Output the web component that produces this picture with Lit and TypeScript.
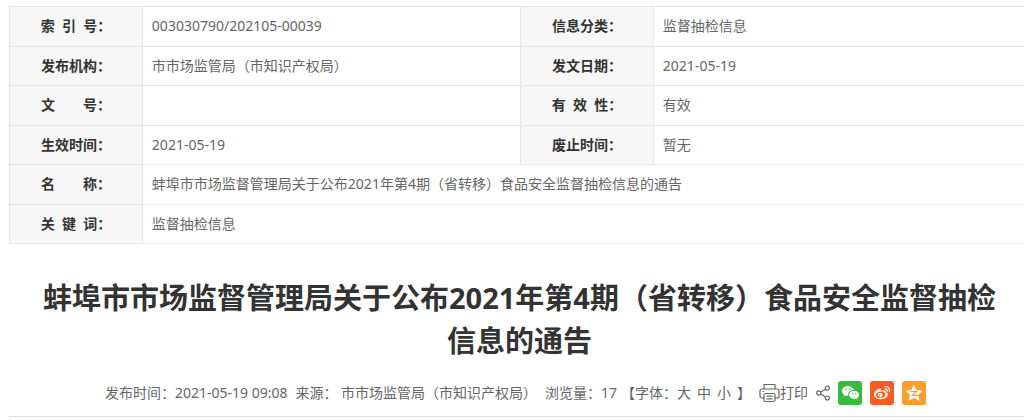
import { LitElement, html, css, nothing } from "lit";
import { customElement } from "lit/decorators.js";

interface Field {
  label: string;
  value: string;
}

const rows: Field[][] = [
  [
    { label: "索\u00a0\u00a0引\u00a0\u00a0号：", value: "003030790/202105-00039" },
    { label: "信息分类：", value: "监督抽检信息" },
  ],
  [
    { label: "发布机构：", value: "市市场监管局（市知识产权局）" },
    { label: "发文日期：", value: "2021-05-19" },
  ],
  [
    { label: "文\u3000\u3000号：", value: "" },
    { label: "有\u00a0\u00a0效\u00a0\u00a0性：", value: "有效" },
  ],
  [
    { label: "生效时间：", value: "2021-05-19" },
    { label: "废止时间：", value: "暂无" },
  ],
  [{ label: "名\u3000\u3000称：", value: "蚌埠市市场监督管理局关于公布2021年第4期（省转移）食品安全监督抽检信息的通告" }],
  [{ label: "关\u00a0\u00a0键\u00a0\u00a0词：", value: "监督抽检信息" }],
];

@customElement("info-table")
class InfoTable extends LitElement {
  static styles = css`
    :host {
      display: block;
    }
    .table {
      width: 100%;
      height: 238px;
      border-collapse: collapse;
      table-layout: fixed;
    }
    .label-col {
      width: 13%;
    }
    .value-col {
      width: 37%;
    }
    .label,
    .value {
      border: 1px solid #e6e6e6;
      padding: 0 9px;
      line-height: 20px;
    }
    .label {
      background: #f7f7f7;
      color: #333;
      font-weight: 700;
      text-align: center;
      white-space: nowrap;
      padding: 0;
    }
    .value {
      color: #666;
      text-align: left;
    }
  `;

  render() {
    return html`
      <table class="table">
        <colgroup>
          <col class="label-col" />
          <col class="value-col" />
          <col class="label-col" />
          <col class="value-col" />
        </colgroup>
        <tbody>
          ${rows.map(
            (row) => html`<tr>
              ${row.map(
                (f) => html`<th class="label" scope="row">${f.label}</th>
                  <td class="value" colspan=${row.length === 1 ? 3 : nothing}>${f.value}</td>`
              )}
            </tr>`
          )}
        </tbody>
      </table>
    `;
  }
}

@customElement("article-meta")
class ArticleMeta extends LitElement {
  static styles = css`
    :host {
      display: block;
    }
    .bar {
      display: flex;
      flex-wrap: wrap;
      justify-content: center;
      align-items: center;
      gap: 8px;
      padding: 7px 10px 11px 0;
      border-bottom: 1px solid #ddd;
      color: #666;
      line-height: 24px;
      white-space: nowrap;
    }
    .reading,
    .sizes,
    .share {
      display: flex;
      align-items: center;
    }
    .reading {
      gap: 4px;
    }
    .sizes {
      gap: 6px;
    }
    .share {
      gap: 8px;
    }
    .label-size {
      display: flex;
    }
    .btn {
      display: flex;
      align-items: center;
      border: 0;
      padding: 0;
      margin: 0;
      background: none;
      color: inherit;
      font: inherit;
      cursor: pointer;
    }
    .tile {
      display: block;
      width: 24px;
      height: 24px;
      border-radius: 3px;
    }
    .tile svg,
    .btn svg {
      display: block;
    }
    .wechat {
      background: #36bc3c;
    }
    .weibo {
      background: #ff5a1f;
    }
    .qzone {
      background: #ff9c2b;
    }
  `;

  render() {
    return html`
      <div class="bar">
        <span>发布时间：2021-05-19 09:08</span>
        <span>来源： 市市场监管局（市知识产权局）</span>
        <span class="reading">
          <span>浏览量：17</span>
          <span class="sizes">
            <span class="label-size">
              <span>【字体：</span>
              <button class="btn" type="button">大</button>
            </span>
            <button class="btn" type="button">中</button>
            <button class="btn" type="button">小</button>
            <span>】</span>
          </span>
        </span>
        <button class="btn" type="button">
          <svg width="21" height="20" viewBox="0 0 21 20" fill="none" stroke="#666" stroke-width="1.2" stroke-linejoin="round">
            <path d="M5 6V1.5h11V6M5 15H3A2 2 0 0 1 1 13V8a2 2 0 0 1 2-2h15a2 2 0 0 1 2 2v5a2 2 0 0 1-2 2h-2" />
            <rect x="5" y="10.5" width="11" height="8" rx="1.5" />
            <path d="M7.5 13.2h6M7.5 15.8h6M3.5 8.5h1.5" />
          </svg>
          打印
        </button>
        <span class="share">
          <svg width="14" height="16" viewBox="0 0 14 16" fill="none" stroke="#666" stroke-width="1.2" aria-hidden="true">
            <circle cx="2.8" cy="8" r="2.1" />
            <circle cx="11.3" cy="3.2" r="2" />
            <circle cx="11.3" cy="13" r="2" />
            <path d="M4.700 7 9.500 4.200M4.700 9.100l4.800 2.900" />
          </svg>
          <a class="tile wechat" href="#wechat" aria-label="微信">
            <svg width="24" height="24" viewBox="0 0 24 24">
              <path fill="#fff" d="M9.8 5C6.300 5 4 7.200 4 9.900c0 1.600.8 2.900 2.100 3.800l-.5 1.800 2.100-1.100c.7.200 1.300.3 2.100.3h.6c-.9-3 1.500-5.600 5.100-5.600h.3C15.200 6.700 12.800 5 9.800 5z" />
              <path fill="#fff" d="M21 13.800c0-2.300-2.200-4.100-4.900-4.100-2.800 0-4.900 1.900-4.900 4.100 0 2.300 2.100 4.100 4.900 4.100.6 0 1.200-.1 1.700-.3l1.700.9-.4-1.500c1.100-.8 1.900-1.900 1.900-3.200z" />
              <g fill="#36bc3c">
                <circle cx="7.900" cy="8.500" r=".8" />
                <circle cx="11.800" cy="8.500" r=".8" />
                <circle cx="14.600" cy="12.600" r=".7" />
                <circle cx="17.700" cy="12.600" r=".7" />
              </g>
            </svg>
          </a>
          <a class="tile weibo" href="#weibo" aria-label="微博">
            <svg width="24" height="24" viewBox="0 0 24 24">
              <path fill="#fff" d="M10.900 8.100c-.8-1.100-3-.3-4.800 1.500C4.600 11.100 4 12.500 4 13.700c0 2.600 3.200 4.500 6.700 4.500 4.400 0 7.200-2.500 7.200-4.600 0-1.300-1-2-2.200-2.300.5-1.300-.1-2.200-1.600-2.100-.9 0-1.800.3-3 .7.200-.8.200-1.400-.2-1.800z" />
              <ellipse cx="10.700" cy="13.900" rx="4.700" ry="3.200" fill="#ff5a1f" transform="rotate(-8 10.700 13.900)" />
              <circle cx="10.300" cy="14.100" r="2.300" fill="#fff" />
              <circle cx="9.700" cy="14.600" r=".8" fill="#ff5a1f" />
              <path fill="none" stroke="#fff" stroke-width="1.200" stroke-linecap="round" d="M14.700 5.600c3.200-.6 5.500 2 4.700 5M15 8c1.500-.3 2.500.8 2.200 2.100" />
            </svg>
          </a>
          <a class="tile qzone" href="#qzone" aria-label="QQ空间">
            <svg width="24" height="24" viewBox="0 0 24 24">
              <path fill="#fff" stroke="#fff" stroke-width=".8" stroke-linejoin="round" d="M12 4.300l2.300 5.100 5.600.6-4.200 3.700 1.200 5.500-4.900-2.800-4.900 2.800 1.200-5.500L4.100 10l5.600-.6z" />
              <path fill="none" stroke="#ff9c2b" stroke-width="1.200" d="M8.500 10.700c2.400-.4 4.300-.4 6.400 0l-4.600 3.400c1.900.4 3.600.4 5.600 0" />
            </svg>
          </a>
        </span>
      </div>
    `;
  }
}

@customElement("app-root")
class AppRoot extends LitElement {
  static styles = css`
    :host {
      display: block;
      overflow: hidden;
      background: #fff;
      font-family: "Noto Sans", "Noto Sans CJK SC", sans-serif;
      font-size: 14px;
    }
    .page {
      margin: 6px -8px 0 9px;
    }
    .title {
      margin: 32px 0 12px;
      padding: 0 26px 0 24px;
      color: #333;
      font-size: 29px;
      font-weight: 700;
      line-height: 43px;
      text-align: center;
    }
  `;

  render() {
    return html`
      <main class="page">
        <info-table></info-table>
        <h1 class="title">蚌埠市市场监督管理局关于公布2021年第4期（省转移）食品安全监督抽检信息的通告</h1>
        <article-meta></article-meta>
      </main>
    `;
  }
}
